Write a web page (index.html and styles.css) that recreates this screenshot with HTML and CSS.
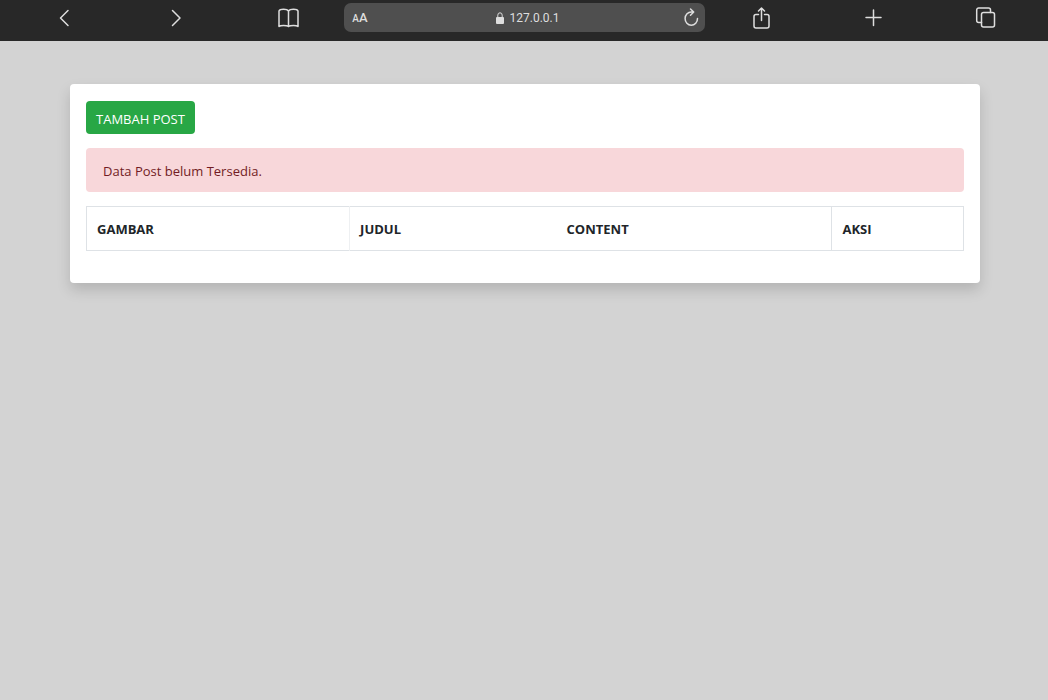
FILE: index.html
```
<!doctype html>
<html lang="id">
    <head>
        <meta charset="UTF-8" />
        <meta name="viewport" content="width=device-width, initial-scale=1.0" />
        <title>Data Post</title>
        <link rel="stylesheet" href="styles.css">
    </head>
    <body>
        <!-- Browser toolbar -->
        <header class="toolbar">
            <button type="button" aria-label="Back">
                <svg width="24" height="24" viewBox="0 0 24 24"><path d="M16 4.5 8.5 12l7.5 7.5" /></svg>
            </button>
            <button type="button" aria-label="Forward">
                <svg width="24" height="24" viewBox="0 0 24 24"><path d="M8.5 4.5 16 12l-7.5 7.5" /></svg>
            </button>
            <button type="button" aria-label="Bookmarks">
                <svg width="24" height="24" viewBox="0 0 24 24"><path d="M12.5 5C11.5 3.5 9.5 3.2 7.5 3.2S3.5 3.5 3 5V20.5C4.5 19 10.5 19 12.5 20.5zM12.5 5C13.5 3.5 15.5 3.2 17.5 3.2S21.5 3.5 22 5V20.5C20.5 19 14.5 19 12.5 20.5" /></svg>
            </button>
            <div class="address">
                <button type="button" class="text-size" aria-label="Text size"><small>A</small>A</button>
                <span class="host">
                    <svg class="lock" width="8" height="12" viewBox="0 0 8 12"><rect x="0" y="5" width="8" height="7" rx="1" /><path d="M1.8 5.5V3.2a2.2 2.4 0 0 1 4.4 0V5.5" /></svg>
                    127.0.0.1
                </span>
                <button type="button" class="reload" aria-label="Reload">
                    <svg width="20" height="22" viewBox="0 0 20 22"><path d="M12.5 5H10.5A6.2 6.6 0 1 0 16.5 11.5M9.500 2l3.200 3-3.200 3.200" /></svg>
                </button>
            </div>
            <button type="button" aria-label="Share">
                <svg width="24" height="24" viewBox="0 0 24 24"><path d="M9.5 8.5H7a2 2 0 0 0-2 2V20a2 2 0 0 0 2 2H18a2 2 0 0 0 2-2V10.5a2 2 0 0 0-2-2H15.5M12.5 14.5V2M9.5 5l3-3 3 3" /></svg>
            </button>
            <button type="button" aria-label="New tab">
                <svg width="24" height="24" viewBox="0 0 24 24"><path d="M12.5 4v15.5M5 11.5h15" /></svg>
            </button>
            <button type="button" aria-label="Tabs">
                <svg width="24" height="24" viewBox="0 0 24 24"><rect x="8.5" y="6.5" width="13" height="14.5" rx="2" /><path d="M8.5 16.5H5.7a2 2 0 0 1-2-2V4a2 2 0 0 1 2-2H15.5a2 2 0 0 1 2 2V6.5" /></svg>
            </button>
        </header>

        <main class="container">
            <div class="card">
                <a href="#" class="btn">TAMBAH POST</a>
                <div class="alert" role="alert">Data Post belum Tersedia.</div>
                <table class="table">
                    <thead>
                        <tr>
                            <th scope="col" class="col-gambar">GAMBAR</th>
                            <th scope="col" class="col-judul">JUDUL</th>
                            <th scope="col" class="col-content">CONTENT</th>
                            <th scope="col" class="col-aksi">AKSI</th>
                        </tr>
                    </thead>
                </table>
            </div>
        </main>
    </body>
</html>
```
FILE: styles.css
```
* {
    box-sizing: border-box;
}
body {
    min-height: 100vh;
    margin: 0;
    background-color: #d3d3d3;
    color: #212529;
    font-family: "Open Sans", "Noto Sans", sans-serif;
    font-size: 13px;
    line-height: 22px;
}
.toolbar {
    display: grid;
    grid-template-columns: repeat(3, 112fr) 361fr repeat(3, 112fr);
    align-items: start;
    height: 41px;
    padding: 3px 7px 0 8px;
    background-color: #282828;
    color: #dedede;
    font-family: Roboto, sans-serif;
}
.toolbar button {
    display: flex;
    justify-content: center;
    align-items: center;
    height: 29px;
    padding: 0;
    border: none;
    background: none;
    color: inherit;
    font-family: inherit;
    cursor: pointer;
}
.toolbar svg {
    fill: none;
    stroke: currentColor;
    stroke-width: 1.5;
    stroke-linecap: round;
    stroke-linejoin: round;
}
.address {
    display: grid;
    grid-template-columns: 32px 1fr 28px;
    align-items: center;
    height: 29px;
    border-radius: 7px;
    background-color: #4f4f4f;
}
.toolbar .text-size {
    align-items: baseline;
    height: 20px;
    font-size: 13px;
    font-weight: 500;
    line-height: 20px;
}
.text-size small {
    font-size: 10px;
}
.host {
    display: flex;
    justify-content: center;
    align-items: center;
    gap: 6px;
    padding-left: 2px;
    font-size: 12px;
}
.toolbar .lock {
    stroke-width: 1;
}
.lock rect {
    fill: currentColor;
    stroke: none;
}
.container {
    padding: 43px 68px 0 70px;
}
.card {
    padding: 17px 16px 32px;
    border-radius: 4px;
    background-color: #fff;
    box-shadow: 0 7px 14px rgba(0, 0, 0, 0.15);
}
.btn {
    display: inline-block;
    padding: 7px 10px 4px;
    border-radius: 4px;
    background-color: #28a745;
    color: #fff;
    text-decoration: none;
    vertical-align: top;
}
.alert {
    margin: 14px 0;
    padding: 12px 17px 10px;
    border-radius: 4px;
    background-color: #f8d7da;
    color: #721c24;
}
.table {
    width: 100%;
    border: 1px solid #dee2e6;
    border-collapse: collapse;
    table-layout: fixed;
}
.table th {
    padding: 11px 10px 10px;
    font-weight: bold;
    text-align: left;
}
.col-gambar {
    width: 30%;
    border-right: 1px solid #eef0f2;
}
.col-judul {
    width: 23.6%;
}
.col-content {
    width: 31.4%;
}
.col-aksi {
    width: 15%;
    border-left: 1px solid #dee2e6;
}
```
